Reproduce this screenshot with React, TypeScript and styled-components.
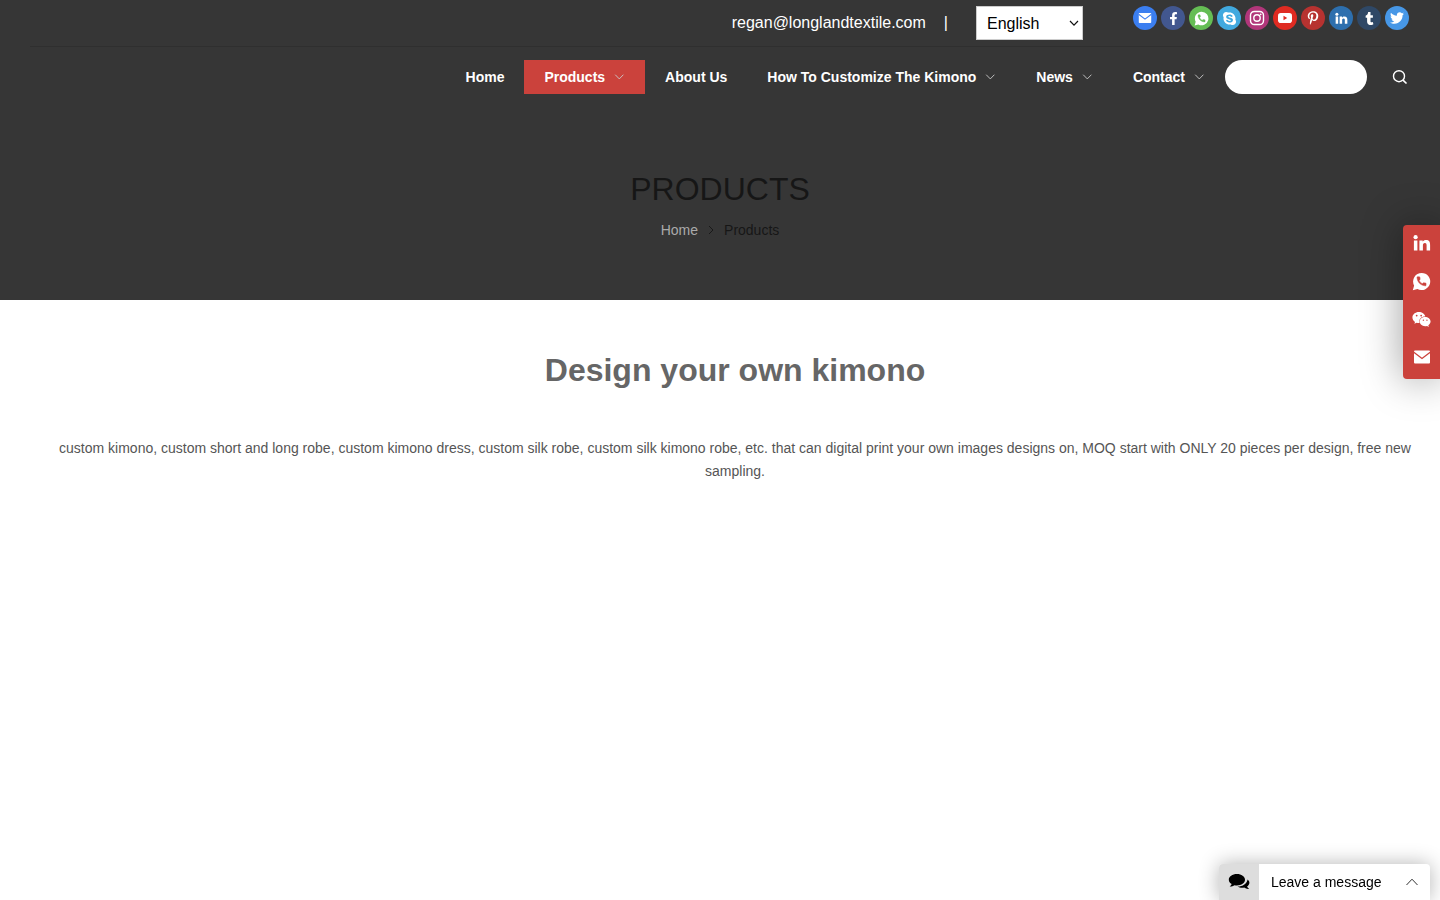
import React from "react";
import styled, { createGlobalStyle } from "styled-components";
import {
  FaFacebookF,
  FaPinterestP,
  FaSkype,
  FaTumblr,
  FaTwitter,
  FaWeixin,
} from "react-icons/fa";

const GlobalStyle = createGlobalStyle`
  *, *::before, *::after { box-sizing: border-box; }
  body {
    margin: 0;
    background: #fff;
    color: #555;
    font-family: "Liberation Sans", Arial, sans-serif;
    font-size: 14px;
  }
  a { color: inherit; text-decoration: none; }
  button, input, select { font-family: inherit; }
`;

const Banner = styled.div`
  min-height: 300px;
  background: #363636;
`;

const TopBar = styled.div`
  display: flex;
  justify-content: flex-end;
  align-items: flex-start;
  height: 47px;
  margin: 0 30px;
  padding-top: 6px;
  border-bottom: 1px solid #2f2f2f;
`;

const Contact = styled.div`
  display: flex;
  gap: 18px;
  margin-right: 28px;
  color: #fff;
  font-size: 16px;
  line-height: 34px;
`;

const LanguageField = styled.div`
  position: relative;
  margin-right: 50px;

  svg {
    position: absolute;
    top: 14px;
    right: 4px;
    pointer-events: none;
  }
`;

const Language = styled.select`
  display: block;
  width: 107px;
  height: 34px;
  padding: 0 20px 0 10px;
  border: 1px solid #ccc;
  border-radius: 0;
  appearance: none;
  background: #fff;
  color: #000;
  font-size: 16px;
`;

const Socials = styled.div`
  display: flex;
  gap: 4px;
  margin-right: 1px;
`;

const SocialLink = styled.a<{ $color: string }>`
  display: grid;
  place-items: center;
  width: 24px;
  height: 24px;
  border-radius: 50%;
  background: ${(p) => p.$color};
  color: #fff;
`;

const NavBar = styled.div`
  display: flex;
  justify-content: flex-end;
  padding: 13px 23px 13px 30px;
`;

const Nav = styled.nav`
  display: flex;
`;

const NavLink = styled.a<{ $active?: boolean }>`
  display: flex;
  align-items: center;
  height: 34px;
  padding: 0 20px;
  background: ${(p) => (p.$active ? "#cb423c" : "transparent")};
  color: #fff;
  font-weight: 700;
  white-space: nowrap;

  svg { margin-left: 9px; }
`;

const Search = styled.form`
  display: flex;
  gap: 16px;
`;

const SearchInput = styled.input`
  width: 142px;
  height: 34px;
  padding: 0 16px;
  border: 0;
  border-radius: 17px;
  background: #fff;
  font-size: 14px;
`;

const SearchButton = styled.button`
  display: grid;
  place-items: center;
  width: 34px;
  height: 34px;
  padding: 0;
  border: 0;
  background: none;
  color: #fff;
  cursor: pointer;
`;

const BannerTitle = styled.h1`
  margin: 62px 0 0;
  color: #161616;
  font-size: 32px;
  font-weight: 400;
  line-height: 40px;
  text-align: center;
  text-transform: uppercase;
`;

const Breadcrumb = styled.nav`
  display: flex;
  justify-content: center;
  align-items: center;
  gap: 10px;
  margin-top: 10px;
  color: #161616;
  line-height: 22px;

  a { color: #aaa; }
`;

const Content = styled.main`
  padding: 50px 15px 40px 45px;
  text-align: center;
`;

const Heading = styled.h2`
  margin: 0;
  color: #666;
  font-size: 32px;
  line-height: 40px;
`;

const Intro = styled.p`
  margin: 47px 0 0;
  line-height: 23px;
`;

const SideBar = styled.aside`
  position: fixed;
  top: 225px;
  right: 0;
  display: flex;
  flex-direction: column;
  gap: 2px;
  width: 37px;
  padding-bottom: 4px;
  border-radius: 4px 0 0 4px;
  background: #cb423c;
  box-shadow: 0 0 40px rgba(0, 0, 0, 0.4);
  color: #fff;
`;

const SideLink = styled.a`
  display: grid;
  place-items: center;
  height: 36px;
`;

const Chat = styled.button`
  position: fixed;
  right: 10px;
  bottom: 0;
  display: flex;
  align-items: center;
  width: 211px;
  height: 36px;
  padding: 0 12px 0 0;
  border: 0;
  border-radius: 4px 4px 0 0;
  overflow: hidden;
  background: #fff;
  box-shadow: 0 0 20px rgba(0, 0, 0, 0.3);
  color: #000;
  font-size: 14px;
  cursor: pointer;
`;

const ChatIcon = styled.span`
  display: grid;
  place-items: center;
  width: 40px;
  height: 36px;
  background: #ddd;
`;

const ChatLabel = styled.span`
  flex: 1;
  padding-left: 12px;
  text-align: left;
`;

const ChevronDown = () => (
  <svg width="11" height="6" viewBox="0 0 11 6" fill="none" stroke="#ccc" strokeWidth="0.9" aria-hidden>
    <path d="M1.200 .7 5.300 4.900 9.400 .7" />
  </svg>
);

const ChevronRight = () => (
  <svg width="6" height="10" viewBox="0 0 6 10" fill="none" stroke="#161616" strokeWidth="0.9" aria-hidden>
    <path d="M1 1 5 5 1 9" />
  </svg>
);

type IconProps = { size: number; back: string };

const MailIcon = ({ size, back }: IconProps) => (
  <svg width={size} height={size} viewBox="0 0 18 18" aria-hidden>
    <rect x="1" y="2.500" width="16" height="13" rx="1" fill="currentColor" />
    <path d="M.8 4.200 9 10.400 17.200 4.200" fill="none" stroke={back} strokeWidth="1.300" />
  </svg>
);

const WhatsAppIcon = ({ size, back }: IconProps) => (
  <svg width={size} height={size} viewBox="0 0 24 24" aria-hidden>
    <path
      fill="currentColor"
      d="M12.200 1.200a10.800 10.800 0 1 1-5.300 20.200L1 23l1.700-5.800A10.800 10.800 0 0 1 12.200 1.200z"
    />
    <path
      fill={back}
      transform="translate(4.500 4.200) scale(.63)"
      d="M20 15.400c-1.200 0-2.400-.2-3.500-.6-.4-.1-.8 0-1 .3l-1.600 2c-2.800-1.400-5.500-3.900-6.900-6.900L9 8.500c.2-.2.300-.6.200-1C8.800 6.400 8.600 5.200 8.600 4c0-.5-.4-1-1-1H4.200C3.600 3 3 3.200 3 4c0 9.300 7.700 17 17 17 .7 0 1-.6 1-1.200v-3.400c0-.6-.4-1-1-1z"
      stroke={back}
      strokeWidth="1"
    />
  </svg>
);

const LinkedInIcon = ({ size }: { size: number }) => (
  <svg width={size} height={size} viewBox="0 0 18 18" fill="currentColor" aria-hidden>
    <circle cx="2.600" cy="3.200" r="2.100" />
    <path d="M.9 6.400h3.500v10H.9zM6.400 6.400h3.300v1.400c.6-1 1.800-1.700 3.300-1.700 3.200 0 4.100 2 4.100 4.800v5.500h-3.500v-4.900c0-1.300-.2-2.400-1.700-2.400s-2 1-2 2.400v4.900H6.400z" />
  </svg>
);

const InstagramIcon = () => (
  <svg width="16" height="16" viewBox="0 0 16 16" fill="none" stroke="currentColor" strokeWidth="1.400" aria-hidden>
    <rect x="1.500" y="1.500" width="13" height="13" rx="3.800" />
    <circle cx="8" cy="8" r="3.200" />
    <circle cx="11.700" cy="4.300" r=".9" fill="currentColor" stroke="none" />
  </svg>
);

const YouTubeIcon = ({ back }: { back: string }) => (
  <svg width="14" height="12" viewBox="0 0 14 12" aria-hidden>
    <rect y="1" width="14" height="10" rx="2.800" fill="currentColor" />
    <path d="M5.500 3.800v4.400L9.200 6z" fill={back} />
  </svg>
);

const CommentsIcon = () => (
  <svg width="22" height="18" viewBox="0 0 22 18" aria-hidden>
    <path d="M19.500 6.400c1.200.9 1.900 2 1.900 3.300 0 1.500-.9 2.900-2.300 3.800.3 1 1 1.700 2 2.400-1.800.3-3.500-.3-4.900-1.300-2.300.4-4.900.1-6.700-1.100 5.300-.1 9.700-2.900 10-7.100z" />
    <path d="M8.900 1c4.500 0 8.100 2.500 8.100 5.700s-3.600 5.700-8.100 5.700c-.8 0-1.600-.1-2.300-.2-1.500 1-3.100 1.500-4.900 1.400 1-.7 1.700-1.500 2-2.500C1.900 10.100.8 8.500.8 6.700.8 3.500 4.400 1 8.900 1z" />
  </svg>
);

const socials = [
  { name: "Email", color: "#3b7ef0", icon: <MailIcon size={14} back="#3b7ef0" /> },
  { name: "Facebook", color: "#42578f", icon: <FaFacebookF size={13} /> },
  { name: "WhatsApp", color: "#65bd54", icon: <WhatsAppIcon size={15} back="#65bd54" /> },
  { name: "Skype", color: "#41a9df", icon: <FaSkype size={15} /> },
  { name: "Instagram", color: "#b1367a", icon: <InstagramIcon /> },
  { name: "YouTube", color: "#df2b22", icon: <YouTubeIcon back="#df2b22" /> },
  { name: "Pinterest", color: "#b73230", icon: <FaPinterestP size={14} /> },
  { name: "LinkedIn", color: "#2d6fae", icon: <LinkedInIcon size={13} /> },
  { name: "Tumblr", color: "#2f4866", icon: <FaTumblr size={13} /> },
  { name: "Twitter", color: "#4797e6", icon: <FaTwitter size={14} /> },
];

const navItems = [
  { label: "Home" },
  { label: "Products", menu: true, active: true },
  { label: "About Us" },
  { label: "How To Customize The Kimono", menu: true },
  { label: "News", menu: true },
  { label: "Contact", menu: true },
];

const sideLinks = [
  { name: "LinkedIn", icon: <LinkedInIcon size={18} /> },
  { name: "WhatsApp", icon: <WhatsAppIcon size={19} back="#cb423c" /> },
  { name: "WeChat", icon: <FaWeixin size={19} /> },
  { name: "Email", icon: <MailIcon size={18} back="#cb423c" /> },
];

export default function App() {
  return (
    <>
      <GlobalStyle />
      <Banner>
        <header>
          <TopBar>
            <Contact>
              <a href="mailto:regan@longlandtextile.com">regan@longlandtextile.com</a>
              <span>|</span>
            </Contact>
            <LanguageField>
              <Language aria-label="Language" defaultValue="English">
                <option>English</option>
              </Language>
              <svg width="10" height="7" viewBox="0 0 10 7" fill="none" stroke="#111" strokeWidth="1.200" aria-hidden>
                <path d="M1 1 5 5.200 9 1" />
              </svg>
            </LanguageField>
            <Socials>
              {socials.map((s) => (
                <SocialLink key={s.name} href="#" aria-label={s.name} $color={s.color}>
                  {s.icon}
                </SocialLink>
              ))}
            </Socials>
          </TopBar>
          <NavBar>
            <Nav>
              {navItems.map((n) => (
                <NavLink key={n.label} href="#" $active={n.active}>
                  {n.label}
                  {n.menu && <ChevronDown />}
                </NavLink>
              ))}
            </Nav>
            <Search role="search">
              <SearchInput type="text" aria-label="Search" />
              <SearchButton type="button" aria-label="Search">
                <svg width="16" height="16" viewBox="0 0 16 16" fill="none" stroke="currentColor" strokeWidth="1.400" aria-hidden>
                  <circle cx="7" cy="7.200" r="5.500" />
                  <path d="m11 11.200 3.500 3.300" strokeWidth="1.700" />
                </svg>
              </SearchButton>
            </Search>
          </NavBar>
        </header>
        <BannerTitle>Products</BannerTitle>
        <Breadcrumb aria-label="Breadcrumb">
          <a href="#">Home</a>
          <ChevronRight />
          <span>Products</span>
        </Breadcrumb>
      </Banner>
      <Content>
        <Heading>Design your own kimono</Heading>
        <Intro>
          custom kimono, custom short and long robe, custom kimono dress, custom silk robe, custom silk
          kimono robe, etc. that can digital print your own images designs on, MOQ start with ONLY 20
          pieces per design, free new sampling.
        </Intro>
      </Content>
      <SideBar>
        {sideLinks.map((s) => (
          <SideLink key={s.name} href="#" aria-label={s.name}>
            {s.icon}
          </SideLink>
        ))}
      </SideBar>
      <Chat type="button">
        <ChatIcon>
          <CommentsIcon />
        </ChatIcon>
        <ChatLabel>Leave a message</ChatLabel>
        <svg width="12" height="8" viewBox="0 0 12 8" fill="none" stroke="#333" strokeWidth="1" aria-hidden>
          <path d="M.5 7 6 1.200 11.500 7" />
        </svg>
      </Chat>
    </>
  );
}
